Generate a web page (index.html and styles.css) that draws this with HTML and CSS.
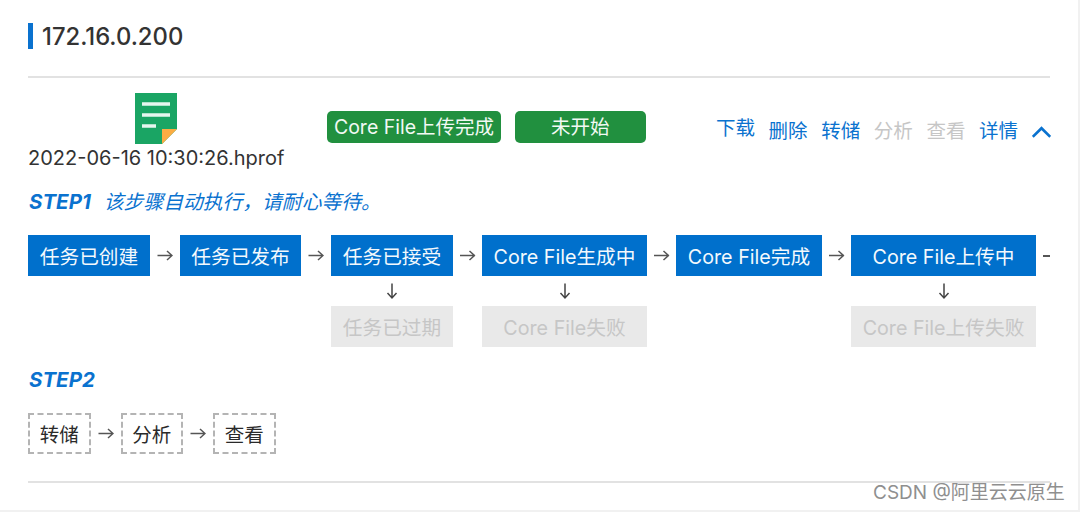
FILE: index.html
```html
<!DOCTYPE html>
<html lang="zh">
<head>
<meta charset="utf-8">
<title>172.16.0.200</title>
<link rel="stylesheet" href="styles.css">
</head>
<body>
<svg class="defs" width="0" height="0" aria-hidden="true">
  <symbol id="arrow-right" viewBox="0 0 16 12"><path d="M0.5 6H15M10 1.5L15 6L10 10.500" fill="none" stroke="currentColor" stroke-width="1.500"/></symbol>
  <symbol id="arrow-down" viewBox="0 0 12 16"><path d="M6 0.500V15M1.500 10L6 15L10.500 10" fill="none" stroke="currentColor" stroke-width="1.500"/></symbol>
</svg>
<main class="page">
  <h1 class="title">172.16.0.200</h1>
  <div class="file-row">
    <div class="file">
      <svg class="file-icon" viewBox="0 0 44 52" aria-hidden="true">
        <path d="M1 0H43V36L28 51H1Z" fill="#1aa564"/>
        <path d="M43 36H28V51Z" fill="#fbac43"/>
        <path d="M8 11H36M8 22H36M8 33H22" stroke="#e6f6ee" stroke-width="3.400" fill="none"/>
      </svg>
      <div class="file-name">2022-06-16 10:30:26.hprof</div>
    </div>
    <div class="tags">
      <span class="tag tag-wide">Core File上传完成</span>
      <span class="tag tag-state">未开始</span>
    </div>
    <nav class="actions">
      <a class="action action-raised">下载</a>
      <a class="action">删除</a>
      <a class="action">转储</a>
      <a class="action disabled">分析</a>
      <a class="action disabled">查看</a>
      <a class="action">详情</a>
      <svg class="chevron" viewBox="0 0 20 12" aria-hidden="true"><path d="M0.800 11L10 2L19.200 11" fill="none" stroke="#0a72cf" stroke-width="2.800"/></svg>
    </nav>
  </div>
  <p class="step-line"><b class="step-name">STEP1</b><i class="step-note">该步骤自动执行，请耐心等待。</i></p>
  <div class="flow">
    <div class="col w-122"><div class="box">任务已创建</div></div>
    <svg class="arrow arrow-wide"><use href="#arrow-right"/></svg>
    <div class="col w-121"><div class="box">任务已发布</div></div>
    <svg class="arrow arrow-wide"><use href="#arrow-right"/></svg>
    <div class="col w-122">
      <div class="box">任务已接受</div>
      <svg class="arrow-d"><use href="#arrow-down"/></svg>
      <div class="box failed">任务已过期</div>
    </div>
    <svg class="arrow"><use href="#arrow-right"/></svg>
    <div class="col w-165">
      <div class="box">Core File生成中</div>
      <svg class="arrow-d"><use href="#arrow-down"/></svg>
      <div class="box failed">Core File失败</div>
    </div>
    <svg class="arrow"><use href="#arrow-right"/></svg>
    <div class="col w-146"><div class="box">Core File完成</div></div>
    <svg class="arrow"><use href="#arrow-right"/></svg>
    <div class="col w-185">
      <div class="box">Core File上传中</div>
      <svg class="arrow-d"><use href="#arrow-down"/></svg>
      <div class="box failed">Core File上传失败</div>
    </div>
    <div class="cut"></div>
  </div>
  <p class="step-line step-two"><b class="step-name">STEP2</b></p>
  <div class="flow-two">
    <div class="dash">转储</div>
    <svg class="arrow arrow-wide"><use href="#arrow-right"/></svg>
    <div class="dash">分析</div>
    <svg class="arrow arrow-wide"><use href="#arrow-right"/></svg>
    <div class="dash">查看</div>
  </div>
  <div class="end-rule"></div>
</main>
<div class="watermark">CSDN @阿里云云原生</div>
</body>
</html>
```
FILE: styles.css
```css
* { box-sizing: border-box; }
html, body { margin: 0; padding: 0; }
body {
  width: 1080px;
  height: 512px;
  overflow: hidden;
  position: relative;
  background: #fff;
  color: #333;
  font-family: Inter, "Noto Sans CJK SC", sans-serif;
  border-right: 2px solid #f1f1f1;
  border-bottom: 2px solid #f1f1f1;
}
.defs { position: absolute; }
.page { width: 1050px; padding: 23px 0 0 28px; }
.title {
  margin: 0;
  height: 26px;
  border-left: 5px solid #0a72cf;
  padding-left: 9px;
  font-size: 23.800px;
  line-height: 28px;
  font-weight: 500;
  color: #333;
}
.file-row {
  margin-top: 27px;
  border-top: 2px solid #e2e2e2;
  padding-top: 15px;
  display: flex;
  height: 114px;
}
.file { width: 299px; flex: none; display: flex; flex-direction: column; }
.file-icon { width: 44px; height: 52px; margin-left: 106px; display: block; flex: none; }
.file-name { font-size: 20px; line-height: 24px; margin-top: 1px; color: #333; white-space: nowrap; }
.tags { display: flex; flex: none; gap: 14px; padding-top: 18px; align-items: flex-start; }
.tag {
  height: 32px;
  background: #21903f;
  color: #f2f9f4;
  border-radius: 5px;
  font-size: 19.500px;
  line-height: 32px;
  white-space: nowrap;
}
.tag-wide { width: 174px; text-align: center; }
.tag-state { width: 131px; padding-left: 36px; }
.actions {
  margin-left: 70px;
  flex: none;
  display: flex;
  gap: 13.600px;
  padding-top: 24px;
  align-items: flex-start;
}
.action { font-size: 19.500px; line-height: 28px; width: 39px; white-space: nowrap; color: #0a72cf; }
.action-raised { margin-top: -3px; }
.disabled { color: #c6c6c6; }
.chevron { width: 19px; height: 12px; margin-top: 9px; }
.step-line { margin: 0; font-size: 19.500px; line-height: 24px; color: #0a72cf; }
.step-two { margin-top: 21px; }
.step-name { font-weight: 700; font-style: italic; font-size: 20.500px; margin-left: 1px; }
.step-note { font-style: italic; margin-left: 13px; font-size: 19.800px; }
.flow { display: flex; margin-top: 21px; height: 112px; width: 1052px; }
.col { display: flex; flex-direction: column; align-items: center; flex: none; }
.w-122 { width: 122px; }
.w-121 { width: 121px; }
.w-165 { width: 165px; }
.w-146 { width: 146px; }
.w-185 { width: 185px; }
.box {
  width: 100%;
  height: 41px;
  background: #0070cc;
  color: #f3f9fd;
  font-size: 19.700px;
  line-height: 45px;
  text-align: center;
  white-space: nowrap;
}
.box.failed { background: #e9e9e9; color: #c6c6c6; }
.arrow { width: 29px; height: 41px; padding: 14px 6.500px; color: #555; flex: none; display: block; }
.arrow-wide { width: 30px; padding: 14px 7px; }
.arrow-d { width: 12px; height: 30px; padding: 6px 0 6px; color: #444; display: block; flex: none; }
.cut { width: 7px; height: 1.500px; margin: 20px 0 0 7px; background: #555; flex: none; }
.flow-two { margin-top: 21px; display: flex; }
.dash {
  width: 62.500px;
  height: 41px;
  border: 2px dashed #b4b4b4;
  font-size: 19.500px;
  line-height: 41px;
  text-align: center;
  color: #2a2a2a;
  flex: none;
}
.end-rule { margin-top: 27px; border-top: 2px solid #e2e2e2; }
.watermark {
  position: absolute;
  left: 873px;
  top: 482px;
  font-size: 19px;
  line-height: 22px;
  color: #8f8f8f;
  white-space: nowrap;
}
```
